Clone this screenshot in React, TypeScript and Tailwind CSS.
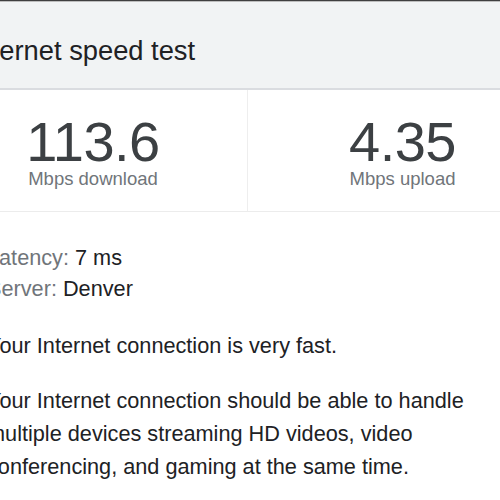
const stats = [
  { value: "113.6", label: "Mbps download" },
  { value: "4.35", label: "Mbps upload" },
];

const details = [
  { label: "Latency:", value: "7 ms" },
  { label: "Server:", value: "Denver" },
];

export default function App() {
  return (
    <div className="w-[500px] h-[500px] overflow-hidden bg-white font-[family-name:'Liberation_Sans',Arial,sans-serif]">
      <div className="h-[1px] bg-[#3f3f3f]" />
      <div className="h-[1px] bg-[#bdbdbd]" />
      <div className="ml-[-61px] w-[618px]">
        {/* header */}
        <div className="bg-[#f1f3f4] border-b-2 border-[#dadce0] pl-[30px] pt-[33px] pb-[21px]">
          <h2 className="text-[27.3px] leading-[32px] text-[#202124]">
            Internet speed test
          </h2>
        </div>

        {/* results */}
        <div className="flex border-b border-[#ececec]">
          {stats.map((s, i) => (
            <div
              key={s.label}
              className={
                i === 0
                  ? "w-[309px] border-r border-[#eeeeee] flex flex-col items-center pt-[25px] pb-[22px]"
                  : "w-[309px] flex flex-col items-center pt-[25px] pb-[22px]"
              }
            >
              <div className="text-[56px] leading-[54px] tracking-[-0.5px] text-[#3c4043]">
                {s.value}
              </div>
              <div className="text-[18.5px] leading-[20px] text-[#70757a]">
                {s.label}
              </div>
            </div>
          ))}
        </div>

        {/* details */}
        <div className="px-[48px] pt-[30px]">
          {details.map((d) => (
            <div key={d.label} className="text-[21.7px] leading-[31px] text-[#202124]">
              <span className="text-[#70757a]">{d.label}</span> {d.value}
            </div>
          ))}
          <p className="mt-[25px] text-[21.7px] leading-[33px] text-[#202124]">
            Your Internet connection is very fast.
          </p>
          <p className="mt-[22px] text-[21.7px] leading-[33px] text-[#202124]">
            Your Internet connection should be able to handle multiple devices
            streaming HD videos, video conferencing, and gaming at the same time.
          </p>
        </div>
      </div>
    </div>
  );
}
